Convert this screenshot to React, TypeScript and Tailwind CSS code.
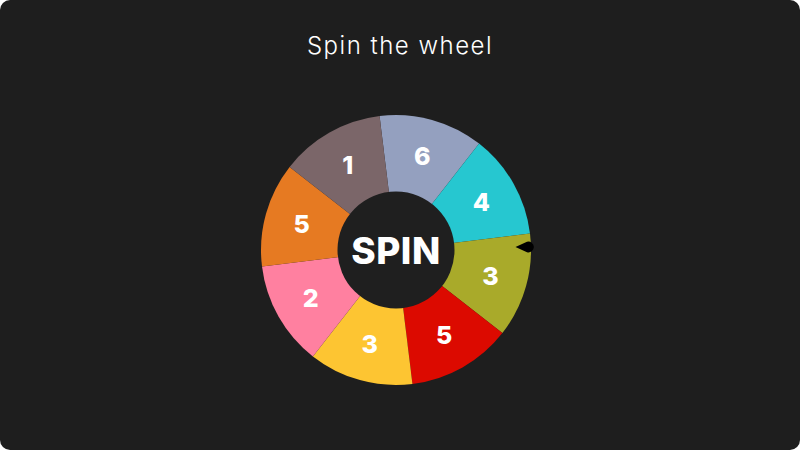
import React from "react";

const segments = [
  { label: "6", color: "#94a0bf" },
  { label: "4", color: "#26c7d0" },
  { label: "3", color: "#a9aa2a" },
  { label: "5", color: "#dc0a00" },
  { label: "3", color: "#fdc532" },
  { label: "2", color: "#ff80a0" },
  { label: "5", color: "#e67a22" },
  { label: "1", color: "#7b6669" },
];

const CX = 140;
const CY = 140;
const R = 135;
const OFFSET = -7;

function pt(angle: number, r: number) {
  const rad = (angle * Math.PI) / 180;
  return [CX + r * Math.sin(rad), CY - r * Math.cos(rad)];
}

function Wheel() {
  return (
    <svg width="290" height="280" viewBox="0 0 290 280" className="block">
      {segments.map((s, i) => {
        const a0 = OFFSET + i * 45;
        const a1 = a0 + 45;
        const [x0, y0] = pt(a0, R);
        const [x1, y1] = pt(a1, R);
        return (
          <path
            key={i}
            d={`M${CX},${CY} L${x0},${y0} A${R},${R} 0 0 1 ${x1},${y1} Z`}
            fill={s.color}
          />
        );
      })}
      {segments.map((s, i) => {
        const [x, y] = pt(OFFSET + i * 45 + 22.5, 98);
        return (
          <text
            key={"t" + i}
            x={x}
            y={y + 9}
            textAnchor="middle"
            fill="#ffffff"
            fontSize="25"
            fontWeight="800"
            fontFamily="Inter, sans-serif"
          >
            {s.label}
          </text>
        );
      })}
      <circle cx={CX} cy={CY} r="58.5" fill="#1f1f1f" />
      <text
        x={CX}
        y={CY + 13.5}
        textAnchor="middle"
        fill="#ffffff"
        fontSize="37"
        fontWeight="800"
        letterSpacing="0.5"
        fontFamily="Inter, sans-serif"
      >
        SPIN
      </text>
      {/* pointer */}
      <path d="M259.5,137 L271,131.8 A5.4,5.4 0 1 1 271,142.2 Z" fill="#000000" />
    </svg>
  );
}

export default function App() {
  return (
    <div className="w-[800px] h-[450px] bg-white">
      <div className="w-full h-full rounded-[10px] bg-[#1e1e1e] flex flex-col items-center">
        <h1 className="pt-[30px] text-[24px] leading-[32px] font-light text-white tracking-[1.5px] font-['Inter',sans-serif]">
          Spin the wheel
        </h1>
        <div className="mt-[48px] ml-[2px]">
          <Wheel />
        </div>
      </div>
    </div>
  );
}
